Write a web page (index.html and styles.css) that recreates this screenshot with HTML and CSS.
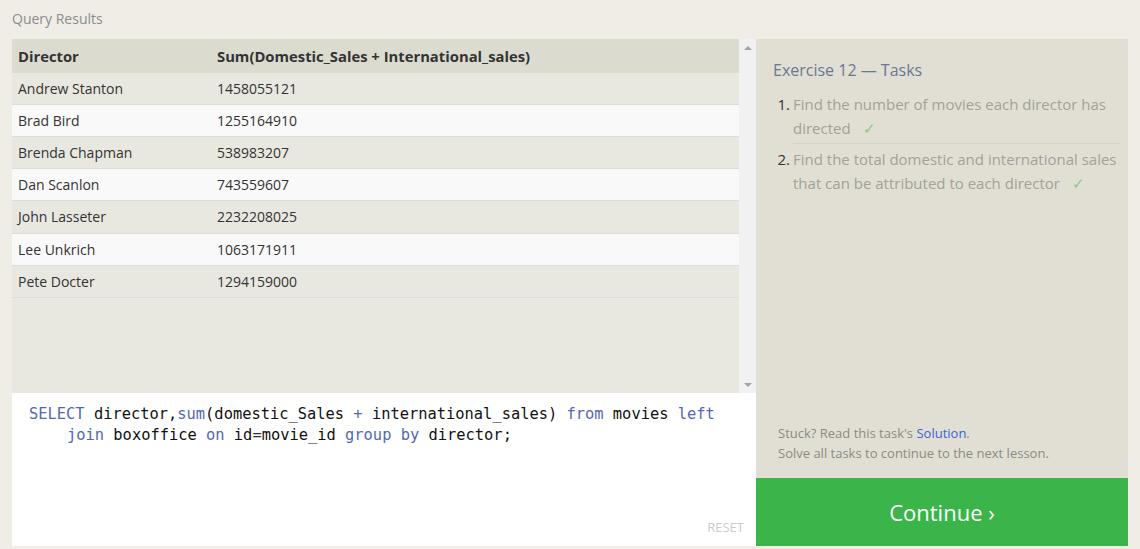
FILE: index.html
```html
<!DOCTYPE html>
<html>
<head>
<meta charset="utf-8">
<link rel="stylesheet" href="styles.css">
</head>
<body>
<div class="title">Query Results</div>
<div class="panel">
  <div class="left">
    <div class="results">
      <div class="table-wrap">
        <table class="results-table">
          <thead>
            <tr><th class="c1">Director</th><th>Sum(Domestic_Sales + International_sales)</th></tr>
          </thead>
          <tbody>
            <tr><td class="c1">Andrew Stanton</td><td>1458055121</td></tr>
            <tr><td class="c1">Brad Bird</td><td>1255164910</td></tr>
            <tr><td class="c1">Brenda Chapman</td><td>538983207</td></tr>
            <tr><td class="c1">Dan Scanlon</td><td>743559607</td></tr>
            <tr><td class="c1">John Lasseter</td><td>2232208025</td></tr>
            <tr><td class="c1">Lee Unkrich</td><td>1063171911</td></tr>
            <tr><td class="c1">Pete Docter</td><td>1294159000</td></tr>
          </tbody>
        </table>
      </div>
      <div class="scrollbar">
        <span class="arrow up"></span>
        <span class="arrow down"></span>
      </div>
    </div>
    <div class="editor">
      <div class="code">
        <div class="line"><span class="kw">SELECT</span> director,<span class="kw">sum</span>(domestic_Sales <span class="kw">+</span> international_sales) <span class="kw">from</span> movies <span class="kw">left</span></div>
        <div class="line indent"><span class="kw">join</span> boxoffice <span class="kw">on</span> id<span class="op">=</span>movie_id <span class="kw">group</span> <span class="kw">by</span> director;</div>
      </div>
      <div class="reset">RESET</div>
    </div>
  </div>
  <div class="right">
    <div class="tasks">
      <h2 class="tasks-title">Exercise 12 — Tasks</h2>
      <ol class="task-list">
        <li class="task"><span class="num">1.</span><span class="task-text">Find the number of movies each director has directed<span class="check">✓</span></span></li>
        <li class="task"><span class="num">2.</span><span class="task-text">Find the total domestic and international sales that can be attributed to each director<span class="check">✓</span></span></li>
      </ol>
    </div>
    <div class="help">
      <div>Stuck? Read this task's <span class="link">Solution</span>.</div>
      <div>Solve all tasks to continue to the next lesson.</div>
    </div>
    <div class="continue">Continue ›</div>
  </div>
</div>
</body>
</html>
```

FILE: styles.css
```css
html, body {
  margin: 0;
  padding: 0;
}
body {
  background: #efede6;
  font-family: "Open Sans", "Noto Sans", sans-serif;
  width: 1140px;
  height: 549px;
  overflow: hidden;
  padding: 0 12px;
  box-sizing: border-box;
}
.title {
  height: 39px;
  line-height: 37px;
  font-size: 14px;
  color: #8c8c8c;
}
.panel {
  display: grid;
  grid-template-columns: 744px 372px;
  height: 507px;
}
.left {
  display: flex;
  flex-direction: column;
}
.results {
  height: 354px;
  display: flex;
  background: #e9e8e0;
}
.table-wrap {
  flex: 1;
}
.results-table {
  width: 100%;
  border-collapse: collapse;
  font-size: 14px;
  color: #333;
}
.results-table th {
  background: #dcdbd0;
  height: 34px;
  padding: 0 6px;
  text-align: left;
  font-weight: 700;
  font-size: 14.8px;
  color: #333;
}
.results-table td {
  height: 31px;
  padding: 0 6px;
  border-bottom: 1px solid #dcdcd8;
}
.results-table tbody tr:nth-child(n+3) td {
  height: 31.2px;
}
.results-table .c1 {
  width: 187px;
}
.results-table tbody tr:nth-child(odd) td {
  background: #e9e8e0;
}
.results-table tbody tr:nth-child(even) td {
  background: #f9f9f9;
}
.scrollbar {
  width: 17px;
  background: #f1f1f1;
  display: flex;
  flex-direction: column;
  justify-content: space-between;
  align-items: center;
  padding: 7px 0 6px;
  box-sizing: border-box;
}
.arrow {
  width: 0;
  height: 0;
  border-left: 4px solid transparent;
  border-right: 4px solid transparent;
}
.arrow.up {
  border-bottom: 4px solid #a3a3a3;
}
.arrow.down {
  border-top: 4px solid #a3a3a3;
}
.editor {
  flex: 1;
  background: #fff;
  display: flex;
  flex-direction: column;
  justify-content: space-between;
  padding: 10px 12px 10px 17px;
}
.code {
  font-family: "DejaVu Sans Mono", "Liberation Mono", monospace;
  font-size: 15.4px;
  line-height: 20.5px;
  color: #111;
  padding-top: 1px;
}
.line.indent {
  padding-left: 38px;
}
.kw {
  color: #5468b0;
}
.op {
  color: #333;
}
.reset {
  align-self: flex-end;
  font-size: 13px;
  color: #cccccc;
}
.right {
  background: #e1dfd4;
  display: flex;
  flex-direction: column;
}
.tasks {
  flex: 1;
  padding: 20px 8px 0 17px;
}
.tasks-title {
  margin: 0 0 11px;
  font-size: 16px;
  font-weight: 400;
  color: #6b7791;
  line-height: 22px;
}
.task-list {
  list-style: none;
  margin: 0;
  padding: 0;
}
.task {
  display: flex;
  font-size: 15px;
  line-height: 24px;
  color: #a3a19a;
}
.num {
  width: 19px;
  flex: none;
  text-align: right;
  color: #333;
  margin-left: -2px;
  margin-right: 3px;
}
.task-text {
  flex: 1;
  padding-bottom: 3px;
}
.task:first-child .task-text {
  border-bottom: 1px solid #d4d2c8;
  margin-bottom: 3px;
}
.check {
  color: #86c98d;
  margin-left: 12px;
}
.help {
  padding: 0 21px 15px 22px;
  font-size: 13px;
  line-height: 20px;
  color: #8c8a84;
}
.link {
  color: #3a5fd5;
}
.continue {
  height: 68px;
  background: #3bb54a;
  color: #fff;
  font-size: 22px;
  display: flex;
  align-items: center;
  justify-content: center;
}
```
